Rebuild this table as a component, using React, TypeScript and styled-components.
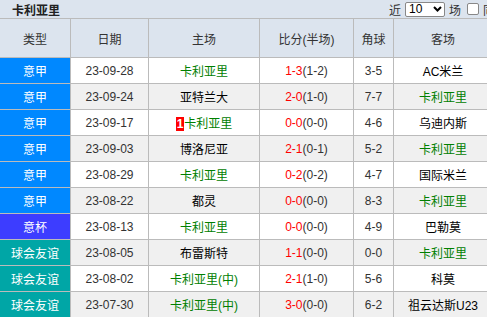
import styled, { createGlobalStyle } from 'styled-components';

const GlobalStyle = createGlobalStyle`
  body {
    margin: 0;
    background: #fff;
    font-family: "Liberation Sans", "Noto Sans CJK SC", sans-serif;
    font-size: 12px;
    color: #333;
  }
`;

const TitleBar = styled.div`
  height: 18px;
  background: #dce4ee;
  border-bottom: 1px solid #bbb;
  display: flex;
  align-items: center;
  justify-content: space-between;
  padding-left: 12px;
  overflow: hidden;
`;

const Title = styled.span`
  font-weight: bold;
  font-size: 12px;
  color: #222;
`;

const Controls = styled.div`
  display: flex;
  align-items: center;
  gap: 4px;
  font-size: 12px;
  color: #333;
  margin-right: -8px;
`;

const Select = styled.div`
  width: 33px;
  height: 13px;
  border: 1px solid #888;
  border-radius: 2px;
  background: #fff;
  display: flex;
  align-items: center;
  justify-content: space-between;
  padding: 0 2px 0 3px;
  font-size: 12px;
  color: #000;
  box-sizing: content-box;
`;

const Check = styled.span`
  width: 10px;
  height: 10px;
  border: 1px solid #888;
  border-radius: 2px;
  background: #fff;
  margin-left: 2px;
`;

const Table = styled.table`
  border-collapse: collapse;
  width: 487px;
  table-layout: fixed;
`;

const Th = styled.th<{ w: number }>`
  width: ${(p) => p.w}px;
  height: 38px;
  background: #dce4ee;
  border: 1px solid #bbb;
  border-top: none;
  font-weight: normal;
  font-size: 12px;
  color: #333;
  padding: 0;
  &:first-child { border-left: none; }
  &:last-child { border-right: none; }
`;

const Tr = styled.tr<{ alt: boolean }>`
  background: ${(p) => (p.alt ? '#f0f0f0' : '#fff')};
`;

const Td = styled.td`
  height: 25px;
  border: 1px solid #bbb;
  text-align: center;
  padding: 0;
  font-size: 12px;
  color: #333;
  white-space: nowrap;
  &:first-child { border-left: none; }
  &:last-child { border-right: none; }
`;

const TypeCell = styled(Td)<{ kind: string }>`
  color: #fff;
  background: ${(p) =>
    p.kind === '意杯' ? '#3d3dff' : p.kind === '球会友谊' ? '#00a6a6' : '#0088ff'};
`;

const Team = styled.span<{ mine: boolean }>`
  color: ${(p) => (p.mine ? '#008000' : '#000')};
`;

const Red = styled.span`
  color: #f00;
`;

const Badge = styled.span`
  background: #f00;
  color: #fff;
  font-weight: bold;
  padding: 0 1px;
`;

type Match = {
  type: string;
  date: string;
  home: string;
  score: string;
  half: string;
  corner: string;
  away: string;
  badge?: string;
};

const matches: Match[] = [
  { type: '意甲', date: '23-09-28', home: '卡利亚里', score: '1-3', half: '(1-2)', corner: '3-5', away: 'AC米兰' },
  { type: '意甲', date: '23-09-24', home: '亚特兰大', score: '2-0', half: '(1-0)', corner: '7-7', away: '卡利亚里' },
  { type: '意甲', date: '23-09-17', home: '卡利亚里', score: '0-0', half: '(0-0)', corner: '4-6', away: '乌迪内斯', badge: '1' },
  { type: '意甲', date: '23-09-03', home: '博洛尼亚', score: '2-1', half: '(0-1)', corner: '5-2', away: '卡利亚里' },
  { type: '意甲', date: '23-08-29', home: '卡利亚里', score: '0-2', half: '(0-2)', corner: '4-7', away: '国际米兰' },
  { type: '意甲', date: '23-08-22', home: '都灵', score: '0-0', half: '(0-0)', corner: '8-3', away: '卡利亚里' },
  { type: '意杯', date: '23-08-13', home: '卡利亚里', score: '0-0', half: '(0-0)', corner: '4-9', away: '巴勒莫' },
  { type: '球会友谊', date: '23-08-05', home: '布雷斯特', score: '1-1', half: '(0-0)', corner: '0-0', away: '卡利亚里' },
  { type: '球会友谊', date: '23-08-02', home: '卡利亚里(中)', score: '2-1', half: '(1-0)', corner: '5-6', away: '科莫' },
  { type: '球会友谊', date: '23-07-30', home: '卡利亚里(中)', score: '3-0', half: '(0-0)', corner: '6-2', away: '祖云达斯U23' },
];

const isMine = (t: string) => t.startsWith('卡利亚里');

export default function App() {
  return (
    <>
      <GlobalStyle />
      <TitleBar>
        <Title>卡利亚里</Title>
        <Controls>
          <span>近</span>
          <Select>
            <span>10</span>
            <svg width="9" height="6" viewBox="0 0 9 6">
              <path d="M1 1l3.5 3.5L8 1" stroke="#000" strokeWidth="2" fill="none" />
            </svg>
          </Select>
          <span>场</span>
          <Check />
          <span>同</span>
        </Controls>
      </TitleBar>
      <Table>
        <thead>
          <tr>
            <Th w={70}>类型</Th>
            <Th w={77}>日期</Th>
            <Th w={110}>主场</Th>
            <Th w={93}>比分(半场)</Th>
            <Th w={39}>角球</Th>
            <Th w={98}>客场</Th>
          </tr>
        </thead>
        <tbody>
          {matches.map((m, i) => (
            <Tr key={m.date} alt={i % 2 === 1}>
              <TypeCell kind={m.type}>{m.type}</TypeCell>
              <Td>{m.date}</Td>
              <Td>
                {m.badge && <Badge>{m.badge}</Badge>}
                <Team mine={isMine(m.home)}>{m.home}</Team>
              </Td>
              <Td>
                <Red>{m.score}</Red>
                {m.half}
              </Td>
              <Td>{m.corner}</Td>
              <Td>
                <Team mine={isMine(m.away)}>{m.away}</Team>
              </Td>
            </Tr>
          ))}
        </tbody>
      </Table>
    </>
  );
}
